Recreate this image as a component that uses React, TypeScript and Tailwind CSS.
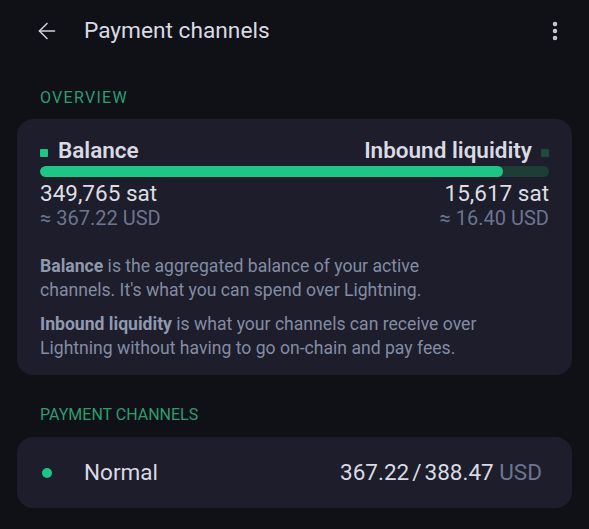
import { ArrowLeft, EllipsisVertical } from "lucide-react";

const font = { fontFamily: "Roboto, 'Noto Sans', sans-serif" };

export default function App() {
  return (
    <div className="min-h-[529px] w-full bg-[#101117] text-[#d9dae3]" style={font}>
      {/* top bar */}
      <div className="flex h-[62px] items-center pl-[34px] pr-[22px]">
        <ArrowLeft className="h-[26px] w-[26px] text-[#d0d1da]" strokeWidth={1.4} />
        <h1 className="ml-[24px] flex-1 pt-[1px] text-[22.7px] text-[#d9dae3]">Payment channels</h1>
        <EllipsisVertical className="h-6 w-6 text-[#c8c9d2]" strokeWidth={2.5} />
      </div>

      <div className="px-[17px]">
        <div className="mt-[24px] px-[23px] text-[16px] leading-[24px] tracking-[0.08em] text-[#2d9d6e]">
          OVERVIEW
        </div>

        <div className="mt-[9px] rounded-[16px] bg-[#1d1d2b] px-[23px] pt-[18px] pb-[15px]">
          <div className="flex items-center justify-between">
            <div className="flex items-center">
              <span className="mt-[6px] mr-[10px] h-[8px] w-[8px] rounded-[1px] bg-[#1fc587]" />
              <span className="text-[22.5px] leading-[26px] font-semibold text-[#d9dae3]">Balance</span>
            </div>
            <div className="flex items-center">
              <span className="text-[22.5px] leading-[26px] font-semibold text-[#d9dae3]">Inbound liquidity</span>
              <span className="mt-[6px] ml-[9px] h-[8px] w-[8px] rounded-[1px] bg-[#1f4a3c]" />
            </div>
          </div>

          <div className="mt-[3px] h-[11px] w-full overflow-hidden rounded-full bg-[#1d3d35]">
            <div className="h-full w-[91%] rounded-full bg-[#1fc587]" />
          </div>

          <div className="mt-[4px] flex justify-between">
            <div>
              <div className="text-[22.5px] leading-[25px] text-[#dcdde5]">349,765 sat</div>
              <div className="mt-[2px] text-[20px] leading-[20px] text-[#6c7590]">≈ 367.22 USD</div>
            </div>
            <div className="text-right">
              <div className="text-[22.5px] leading-[25px] text-[#dcdde5]">15,617 sat</div>
              <div className="mt-[2px] text-[20px] leading-[20px] text-[#6c7590]">≈ 16.40 USD</div>
            </div>
          </div>

          <p className="mt-[26px] text-[17.6px] leading-[24px] text-[#838ca3]">
            <span className="font-bold text-[#8f99b0]">Balance</span> is the aggregated balance of your active
            <br />
            channels. It's what you can spend over Lightning.
          </p>
          <p className="mt-[10px] text-[17.6px] leading-[24px] text-[#838ca3]">
            <span className="font-bold text-[#8f99b0]">Inbound liquidity</span> is what your channels can receive over
            <br />
            Lightning without having to go on-chain and pay fees.
          </p>
        </div>

        <div className="mt-[28px] px-[23px] text-[16px] leading-[24px] tracking-[0] text-[#2d9d6e]">
          PAYMENT CHANNELS
        </div>

        <div className="mt-[10px] flex h-[71px] items-center rounded-[16px] bg-[#1d1d2b] pl-[25px] pr-[30px]">
          <span className="h-[10px] w-[10px] rounded-full bg-[#1fc587]" />
          <span className="ml-[32px] flex-1 text-[22.5px] text-[#d9dae3]">Normal</span>
          <span className="text-[22.5px] text-[#d9dae3]">
            367.22<span className="mx-[3px]">/</span>388.47 <span className="text-[#6c7590]">USD</span>
          </span>
        </div>
      </div>
    </div>
  );
}
